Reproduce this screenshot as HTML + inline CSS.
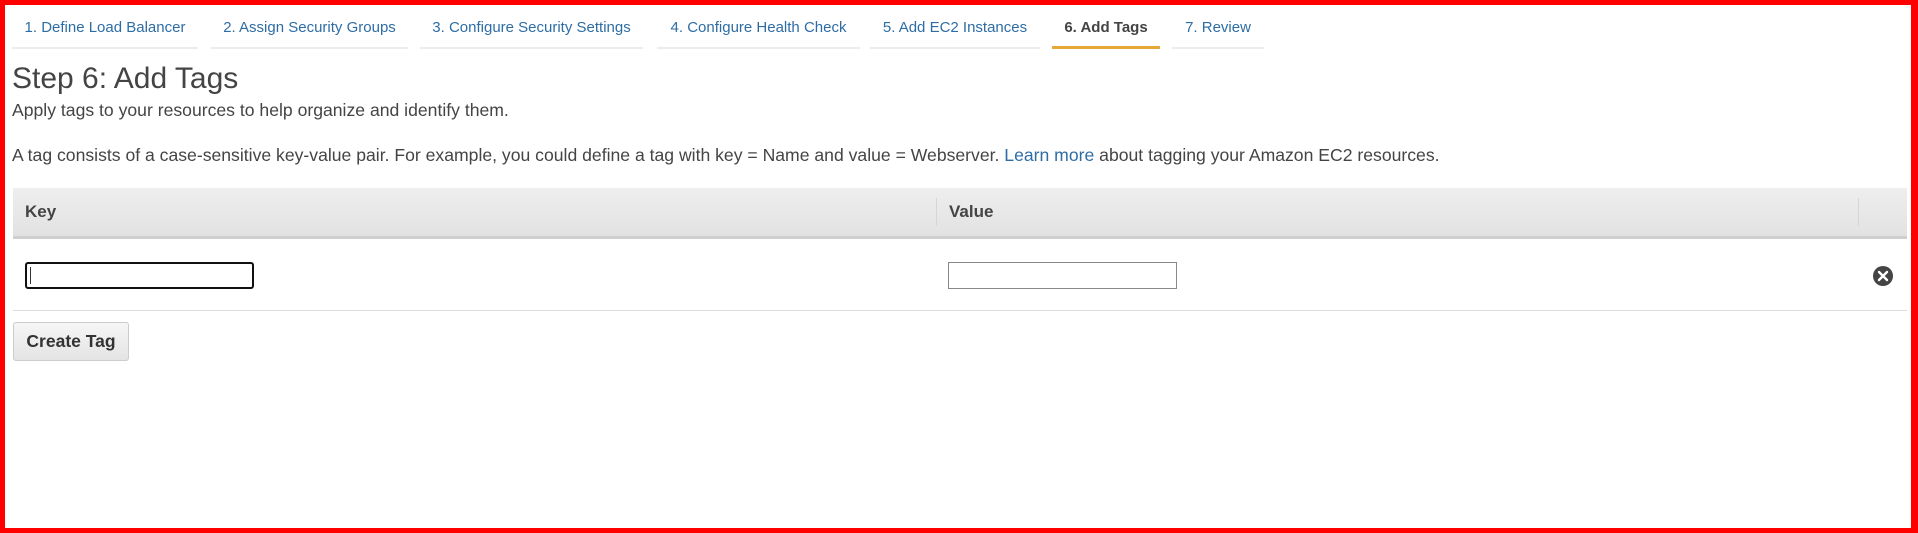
<!DOCTYPE html>
<html><head><style>
html,body{margin:0;padding:0}
body{width:1918px;height:533px;position:relative;background:#fff;font-family:"Liberation Sans",Arial,sans-serif;color:#444;overflow:hidden}
.frame{position:absolute;left:0;top:0;width:1918px;height:533px;box-sizing:border-box;border:5px solid #f00;border-right-width:7px;z-index:10;pointer-events:none}
.tab{position:absolute;top:14px;height:33px;border-bottom:2px solid #ececec;font-size:15px;color:#2e6da4;text-align:center;line-height:28px}
.tab.act{border-bottom:3px solid #e6a935;height:32px;color:#444;font-weight:bold}
.abs{position:absolute;white-space:nowrap}
.thead{position:absolute;left:13px;top:188px;width:1894px;height:48px;background:linear-gradient(#eeeeee,#e2e2e2);border-bottom:3px solid #cfcfcf}
.row{position:absolute;left:13px;top:239px;width:1894px;height:71px;border-bottom:1px solid #ddd}
input{position:absolute;height:24px;box-sizing:border-box;background:#fff}
</style></head><body>
<div class="frame"></div>
<div class="tab" style="left:12px;width:186px">1. Define Load Balancer</div>
<div class="tab" style="left:211px;width:197px">2. Assign Security Groups</div>
<div class="tab" style="left:420px;width:223px">3. Configure Security Settings</div>
<div class="tab" style="left:657px;width:203px">4. Configure Health Check</div>
<div class="tab" style="left:870px;width:170px">5. Add EC2 Instances</div>
<div class="tab act" style="left:1052px;width:108px">6. Add Tags</div>
<div class="tab" style="left:1172px;width:92px">7. Review</div>
<div class="abs" style="left:12px;top:62px;font-size:30px;color:#444">Step 6: Add Tags</div>
<div class="abs" style="left:12px;top:100px;font-size:17.6px">Apply tags to your resources to help organize and identify them.</div>
<div class="abs" style="left:12px;top:145px;font-size:17.6px">A tag consists of a case-sensitive key-value pair. For example, you could define a tag with key = Name and value = Webserver. <span style="color:#2e6da4">Learn more</span> about tagging your Amazon EC2 resources.</div>
<div class="thead">
 <div class="abs" style="left:12px;top:14px;font-size:17px;font-weight:bold;color:#444">Key</div>
 <div class="abs" style="left:923px;top:10px;width:1px;height:28px;background:#d6d6d6"></div>
 <div class="abs" style="left:936px;top:14px;font-size:17px;font-weight:bold;color:#444">Value</div>
 <div class="abs" style="left:1845px;top:10px;width:1px;height:28px;background:#d6d6d6"></div>
</div>
<div class="row"></div>
<input style="left:25px;top:262px;width:229px;height:27px;border:2px solid #111;border-radius:3px">
<div class="abs" style="left:30px;top:267px;width:1px;height:17px;background:#333"></div>
<input style="left:948px;top:262px;width:229px;height:27px;border:1px solid #888">
<svg class="abs" style="left:1872px;top:265px" width="22" height="22" viewBox="0 0 22 22"><circle cx="11" cy="11" r="10" fill="#444"/><path d="M7 7L15 15M15 7L7 15" stroke="#fff" stroke-width="2.4" stroke-linecap="round"/></svg>
<div class="abs" style="left:13px;top:322px;width:116px;height:39px;box-sizing:border-box;border:1px solid #ccc;border-radius:3px;background:linear-gradient(#f6f6f6,#e4e4e4);font-size:17.5px;font-weight:bold;color:#333;text-align:center;line-height:37px">Create Tag</div>
</body></html>
